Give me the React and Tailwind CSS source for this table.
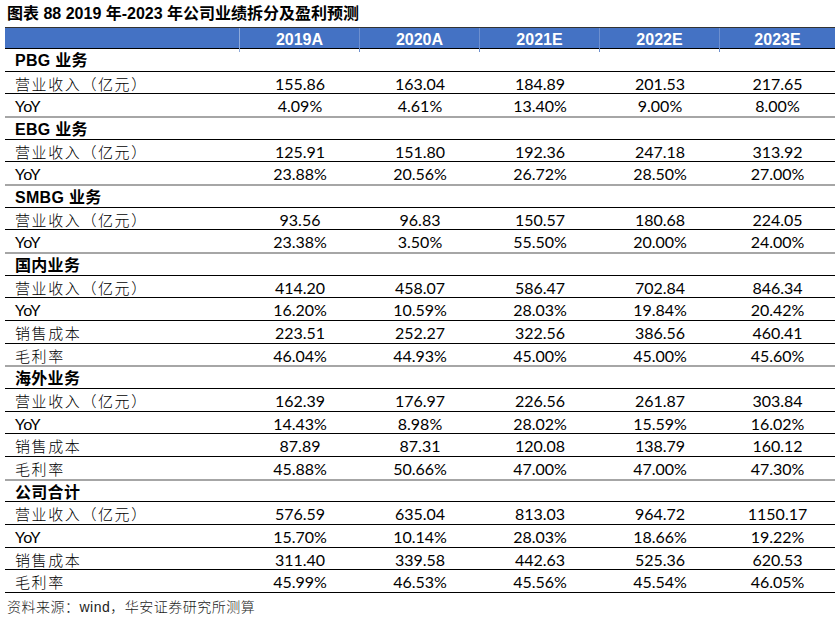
import React from "react";

const sections = [
  {
    title: "PBG 业务",
    rows: [
      ["营业收入（亿元）", "155.86", "163.04", "184.89", "201.53", "217.65"],
      ["YoY", "4.09%", "4.61%", "13.40%", "9.00%", "8.00%"],
    ],
  },
  {
    title: "EBG 业务",
    rows: [
      ["营业收入（亿元）", "125.91", "151.80", "192.36", "247.18", "313.92"],
      ["YoY", "23.88%", "20.56%", "26.72%", "28.50%", "27.00%"],
    ],
  },
  {
    title: "SMBG 业务",
    rows: [
      ["营业收入（亿元）", "93.56", "96.83", "150.57", "180.68", "224.05"],
      ["YoY", "23.38%", "3.50%", "55.50%", "20.00%", "24.00%"],
    ],
  },
  {
    title: "国内业务",
    rows: [
      ["营业收入（亿元）", "414.20", "458.07", "586.47", "702.84", "846.34"],
      ["YoY", "16.20%", "10.59%", "28.03%", "19.84%", "20.42%"],
      ["销售成本", "223.51", "252.27", "322.56", "386.56", "460.41"],
      ["毛利率", "46.04%", "44.93%", "45.00%", "45.00%", "45.60%"],
    ],
  },
  {
    title: "海外业务",
    rows: [
      ["营业收入（亿元）", "162.39", "176.97", "226.56", "261.87", "303.84"],
      ["YoY", "14.43%", "8.98%", "28.02%", "15.59%", "16.02%"],
      ["销售成本", "87.89", "87.31", "120.08", "138.79", "160.12"],
      ["毛利率", "45.88%", "50.66%", "47.00%", "47.00%", "47.30%"],
    ],
  },
  {
    title: "公司合计",
    rows: [
      ["营业收入（亿元）", "576.59", "635.04", "813.03", "964.72", "1150.17"],
      ["YoY", "15.70%", "10.14%", "28.03%", "18.66%", "19.22%"],
      ["销售成本", "311.40", "339.58", "442.63", "525.36", "620.53"],
      ["毛利率", "45.99%", "46.53%", "45.56%", "45.54%", "46.05%"],
    ],
  },
];

const heights = [23, 22, 23];
const years = ["2019A", "2020A", "2021E", "2022E", "2023E"];

const gridCols = "grid grid-cols-[235px_120px_120px_120px_120px_115px]";

export default function App() {
  let idx = 0;
  const rows = [];
  sections.forEach((sec, si) => {
    const h = heights[idx % 3];
    idx++;
    rows.push(
      <div
        key={"s" + si}
        className={`${gridCols} box-border items-center ${
          si === 0 ? "border-t border-black" : "border-t-2 border-[#a6a6a6]"
        }`}
        style={{ height: h }}
      >
        <div className="pl-[10px] font-bold text-[16px] text-black font-['Liberation_Sans','Noto_Sans_CJK_SC',sans-serif] tracking-[0.3px]">
          {sec.title}
        </div>
      </div>
    );
    sec.rows.forEach((r, ri) => {
      const hh = heights[idx % 3];
      idx++;
      const isCJK = r[0] !== "YoY";
      rows.push(
        <div
          key={"r" + si + "-" + ri}
          className={`${gridCols} box-border items-center border-t border-black`}
          style={{ height: hh }}
        >
          <div
            className={
              isCJK
                ? "pl-[10px] text-[15px] font-light tracking-[1.6px] text-black font-['Noto_Sans_CJK_SC',sans-serif]"
                : "pl-[10px] text-[16px] text-black font-['Lato',sans-serif]"
            }
          >
            {r[0]}
          </div>
          {r.slice(1).map((v, vi) => (
            <div
              key={vi}
              className="text-center text-[16px] text-black font-['Lato',sans-serif]"
            >
              {v}
            </div>
          ))}
        </div>
      );
    });
  });

  return (
    <div className="w-[835px] h-[620px] bg-white overflow-hidden">
      <div className="h-[27px] pl-[7px] pt-[4px] text-[16px] font-bold leading-[20px] text-black font-['Liberation_Sans','Noto_Sans_CJK_SC',sans-serif] whitespace-nowrap">
        图表 88 2019 年-2023 年公司业绩拆分及盈利预测
      </div>
      <div className="ml-[5px] w-[830px]">
        <div
          className={`${gridCols} h-[21px] box-border border-t border-[#333] bg-[#4472c4] items-center`}
        >
          <div className="h-full border-r border-[#8eaadb]" />
          {years.map((y, i) => (
            <div
              key={y}
              className={`h-full flex items-center justify-center text-white font-bold text-[16px] font-['Liberation_Sans',sans-serif] ${
                i < 4 ? "border-r border-[#6d8fcf]" : ""
              }`}
            >
              {y}
            </div>
          ))}
        </div>
        {rows}
        <div className="border-t border-black" />
      </div>
      <div className="pl-[7px] pt-[4px] text-[14px] text-[#222] font-light tracking-[0.5px] font-['Noto_Sans_CJK_SC',sans-serif] leading-[18px]">
        资料来源：<span className="font-['Liberation_Sans',sans-serif] font-normal">wind</span>，华安证券研究所测算
      </div>
    </div>
  );
}
